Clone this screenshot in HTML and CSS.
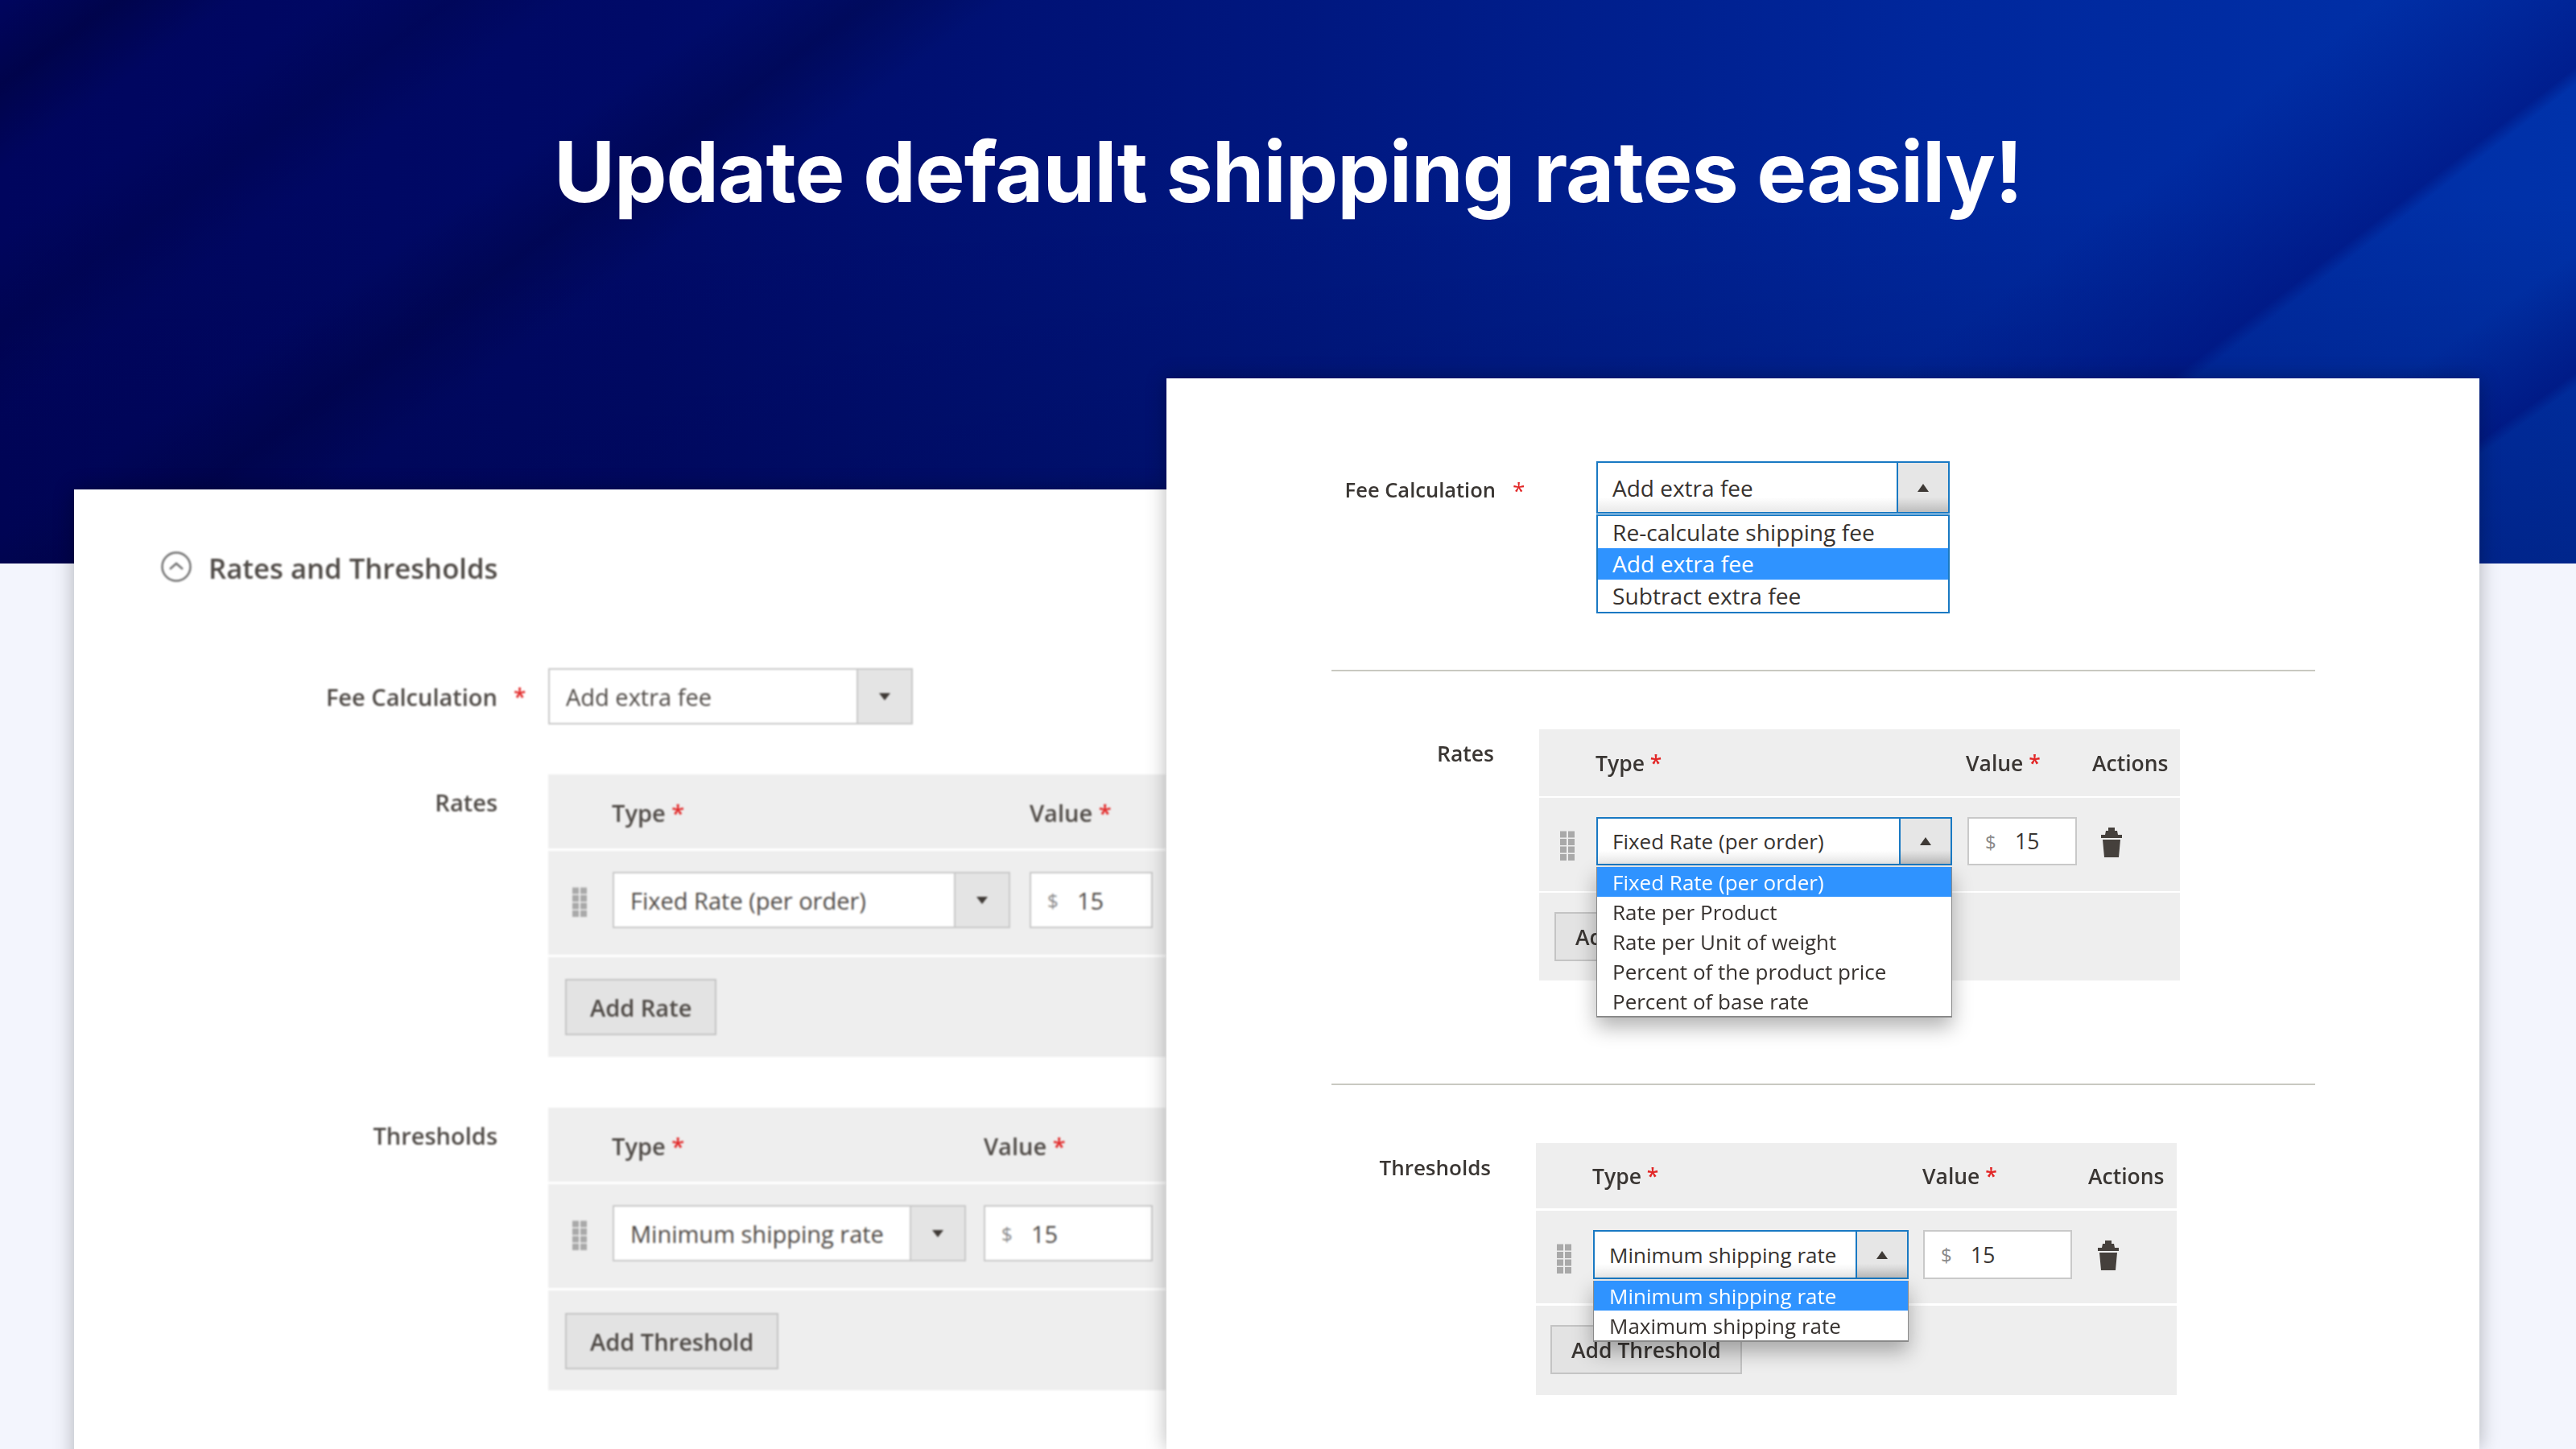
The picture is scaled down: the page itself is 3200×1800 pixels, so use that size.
FILE: index.html
```html
<!DOCTYPE html>
<html lang="en">
<head>
    <meta charset="UTF-8">
    <meta name="viewport" content="width=device-width, initial-scale=1.0">
    <title>Update default shipping rates easily!</title>
    <link rel="stylesheet" href="styles.css">
</head>
<body>
    <div class="hero">
        <h1>Update default shipping rates easily!</h1>
    </div>

    <div class="cards">
        <!-- closed state -->
        <div class="card card-left">
            <div class="card-body">
                <div class="section-title">
                    <svg class="collapse-icon" viewBox="0 0 38 38"><circle cx="19" cy="19" r="17.5"/><path d="M11 22l8-7 8 7"/></svg>
                    <span>Rates and Thresholds</span>
                </div>

                <div class="field-row fee-row">
                    <div class="field-label">Fee Calculation</div>
                    <div class="req">*</div>
                    <div class="select fee-select">
                        <div class="select-text">Add extra fee</div>
                        <div class="select-btn"><span class="arrow-down"></span></div>
                    </div>
                </div>

                <div class="field-row rates-row">
                    <div class="field-label table-label">Rates</div>
                    <div class="dyn-table">
                        <div class="t-head">
                            <div class="col-type">Type <span class="req-inline">*</span></div>
                            <div>Value <span class="req-inline">*</span></div>
                        </div>
                        <div class="t-row">
                            <svg class="drag" viewBox="0 0 18 36"><path d="M0 0h8v8H0zM10 0h8v8h-8zM0 9.500h8v8H0zM10 9.500h8v8h-8zM0 19h8v8H0zM10 19h8v8h-8zM0 28.500h8v8H0zM10 28.500h8v8h-8z"/></svg>
                            <div class="select col-type">
                                <div class="select-text">Fixed Rate (per order)</div>
                                <div class="select-btn"><span class="arrow-down"></span></div>
                            </div>
                            <div class="value-input"><span class="currency">$</span><span>15</span></div>
                        </div>
                        <div class="t-foot"><div class="add-btn">Add Rate</div></div>
                    </div>
                </div>

                <div class="field-row thresholds-row">
                    <div class="field-label table-label">Thresholds</div>
                    <div class="dyn-table narrow-type">
                        <div class="t-head">
                            <div class="col-type">Type <span class="req-inline">*</span></div>
                            <div>Value <span class="req-inline">*</span></div>
                        </div>
                        <div class="t-row">
                            <svg class="drag" viewBox="0 0 18 36"><path d="M0 0h8v8H0zM10 0h8v8h-8zM0 9.500h8v8H0zM10 9.500h8v8h-8zM0 19h8v8H0zM10 19h8v8h-8zM0 28.500h8v8H0zM10 28.500h8v8h-8z"/></svg>
                            <div class="select col-type">
                                <div class="select-text">Minimum shipping rate</div>
                                <div class="select-btn"><span class="arrow-down"></span></div>
                            </div>
                            <div class="value-input"><span class="currency">$</span><span>15</span></div>
                        </div>
                        <div class="t-foot"><div class="add-btn">Add Threshold</div></div>
                    </div>
                </div>
            </div>
        </div>

        <!-- open dropdowns -->
        <div class="card card-right">
            <div class="fee-open">
                <div class="field-label">Fee Calculation</div>
                <div class="req">*</div>
                <div class="select select-open">
                    <div class="select-text">Add extra fee</div>
                    <div class="select-btn"><span class="arrow-up"></span></div>
                    <div class="dropdown fee-dropdown">
                        <div class="option">Re-calculate shipping fee</div>
                        <div class="option selected">Add extra fee</div>
                        <div class="option">Subtract extra fee</div>
                    </div>
                </div>
            </div>

            <div class="divider"></div>

            <div class="open-section open-rates">
                <div class="field-label">Rates</div>
                <div class="dyn-table">
                    <div class="t-head">
                        <div class="col-type">Type <span class="req-inline">*</span></div>
                        <div class="col-value">Value <span class="req-inline">*</span></div>
                        <div>Actions</div>
                    </div>
                    <div class="t-row">
                        <svg class="drag" viewBox="0 0 18 36"><path d="M0 0h8v8H0zM10 0h8v8h-8zM0 9.500h8v8H0zM10 9.500h8v8h-8zM0 19h8v8H0zM10 19h8v8h-8zM0 28.500h8v8H0zM10 28.500h8v8h-8z"/></svg>
                        <div class="select select-open col-type">
                            <div class="select-text">Fixed Rate (per order)</div>
                            <div class="select-btn"><span class="arrow-up"></span></div>
                            <div class="dropdown plain-dropdown">
                                <div class="option selected">Fixed Rate (per order)</div>
                                <div class="option">Rate per Product</div>
                                <div class="option">Rate per Unit of weight</div>
                                <div class="option">Percent of the product price</div>
                                <div class="option">Percent of base rate</div>
                            </div>
                        </div>
                        <div class="value-input col-value"><span class="currency">$</span><span>15</span></div>
                        <svg class="trash" viewBox="0 0 28 37"><path d="M10 0h8v4h3l1 5h5v4H1V9h5l1-5h3zM3 15h22l-2 22H5z"/></svg>
                    </div>
                    <div class="t-foot"><div class="add-btn">Add</div></div>
                </div>
            </div>

            <div class="divider"></div>

            <div class="open-section open-thresholds">
                <div class="field-label">Thresholds</div>
                <div class="dyn-table">
                    <div class="t-head">
                        <div class="col-type">Type <span class="req-inline">*</span></div>
                        <div class="col-value">Value <span class="req-inline">*</span></div>
                        <div>Actions</div>
                    </div>
                    <div class="t-row">
                        <svg class="drag" viewBox="0 0 18 36"><path d="M0 0h8v8H0zM10 0h8v8h-8zM0 9.500h8v8H0zM10 9.500h8v8h-8zM0 19h8v8H0zM10 19h8v8h-8zM0 28.500h8v8H0zM10 28.500h8v8h-8z"/></svg>
                        <div class="select select-open col-type">
                            <div class="select-text">Minimum shipping rate</div>
                            <div class="select-btn"><span class="arrow-up"></span></div>
                            <div class="dropdown plain-dropdown">
                                <div class="option selected">Minimum shipping rate</div>
                                <div class="option">Maximum shipping rate</div>
                            </div>
                        </div>
                        <div class="value-input col-value"><span class="currency">$</span><span>15</span></div>
                        <svg class="trash" viewBox="0 0 28 37"><path d="M10 0h8v4h3l1 5h5v4H1V9h5l1-5h3zM3 15h22l-2 22H5z"/></svg>
                    </div>
                    <div class="t-foot"><div class="add-btn">Add Threshold</div></div>
                </div>
            </div>
        </div>
    </div>
</body>
</html>
```

FILE: styles.css
```css
* {
    box-sizing: border-box;
}
html, body {
    margin: 0;
    height: 1800px;
    overflow: hidden;
}
body {
    font-family: "Open Sans", "Liberation Sans", sans-serif;
    background-color: #f3f5fd;
    color: #3a3633;
}

/* banner */
.hero {
    height: 700px;
    padding-top: 144px;
    background:
        linear-gradient(144.7deg, transparent 87%, rgba(0, 14, 120, 0.55) 92%, transparent 92.6%),
        linear-gradient(142.4deg, transparent 72%, rgba(0, 14, 120, 0.55) 80.5%, transparent 81.2%),
        linear-gradient(144deg, transparent 0%, rgba(0, 0, 40, 0.35) 3.5%, transparent 7%, transparent 10%, rgba(0, 0, 50, 0.2) 13.5%, transparent 17%, transparent 22%, rgba(0, 0, 50, 0.3) 26%, transparent 30%),
        linear-gradient(180deg, transparent 35%, rgba(0, 0, 50, 0.25) 100%),
        linear-gradient(90deg, #00055e 0%, #000a68 25%, #00177f 50%, #00279c 75%, #0032aa 100%);
}
.hero h1 {
    margin: 0;
    text-align: center;
    color: #fff;
    font-family: Inter, "Open Sans", sans-serif;
    font-weight: 700;
    font-size: 104px;
    line-height: 138px;
    letter-spacing: -1px;
}

/* cards */
.cards {
    display: flex;
    align-items: flex-start;
    margin: -230px 0 0 92px;
}
.card {
    background: #fff;
    height: 1330px;
    box-shadow: 0 0 24px rgba(0, 0, 0, 0.28);
}
.card-left {
    width: 1357px;
    margin-top: 138px;
    overflow: hidden;
}
.card-body {
    padding: 77px 0 0 108px;
    filter: blur(0.9px);
    color: #4f4a46;
}
.card-right {
    position: relative;
    width: 1631px;
    padding: 103px 0 0 205px;
}

/* left card */
.section-title {
    display: flex;
    align-items: center;
    gap: 21px;
    height: 40px;
    font-size: 34.700px;
    font-weight: 600;
}
.collapse-icon {
    width: 38px;
    height: 38px;
    margin-top: -2px;
    fill: none;
    stroke: #707070;
    stroke-width: 2.500;
}
.field-row {
    display: grid;
    grid-template-columns: 418px 63px 767px;
}
.fee-row {
    margin-top: 105px;
    align-items: center;
}
.rates-row {
    margin-top: 62px;
}
.thresholds-row {
    margin-top: 63px;
}
.field-label {
    font-size: 29px;
    font-weight: 600;
    text-align: right;
}
.table-label {
    grid-column: 1;
    padding-top: 15px;
}
.field-row .dyn-table {
    grid-column: 3;
}
.req {
    padding-left: 20px;
    color: #e22626;
    font-size: 28px;
    font-weight: 600;
}
.req-inline {
    color: #e22626;
}

/* select */
.select {
    position: relative;
    display: flex;
    height: 70px;
    border: 2px solid #c9c9c9;
    background: #fff;
    font-size: 29px;
}
.fee-select {
    width: 453px;
}
.select-text {
    flex: 1;
    min-width: 0;
    padding-left: 20px;
    display: flex;
    align-items: center;
    white-space: nowrap;
}
.select-btn {
    flex: none;
    width: 68px;
    display: flex;
    align-items: center;
    justify-content: center;
    border-left: 2px solid #c9c9c9;
    background: #e4e4e4;
}
.arrow-down {
    border-left: 7px solid transparent;
    border-right: 7px solid transparent;
    border-top: 9px solid #3f3a36;
}
.arrow-up {
    border-left: 7px solid transparent;
    border-right: 7px solid transparent;
    border-bottom: 10px solid #3f3a36;
}

/* dynamic rows table */
.dyn-table {
    font-size: 29px;
}
.t-head, .t-row, .t-foot {
    display: flex;
    background: #eee;
}
.t-head {
    height: 92px;
    align-items: center;
    padding: 2px 0 0 79px;
    font-weight: 600;
}
.t-row {
    position: relative;
    height: 129px;
    margin-top: 3px;
    padding: 26px 0 0 30px;
}
.t-foot {
    height: 124px;
    margin-top: 3px;
    padding: 27px 0 0 21px;
}
.narrow-type .t-foot {
    padding-top: 28px;
}
.card-left .col-type {
    width: 519px;
}
.card-left .t-row .col-type {
    width: 494px;
    margin: 0 24px 0 32px;
}
.card-left .narrow-type .col-type {
    width: 462px;
}
.card-left .narrow-type .t-row .col-type {
    width: 439px;
    margin-right: 22px;
}
.card-left .value-input {
    width: 153px;
}
.card-left .narrow-type .value-input {
    width: 210px;
}
.drag {
    flex: none;
    width: 18px;
    height: 37px;
    margin-top: 19px;
    fill: #a9a9a9;
}
.value-input {
    display: flex;
    align-items: center;
    height: 70px;
    padding-left: 20px;
    border: 2px solid #c9c9c9;
    background: #fff;
    font-size: 29px;
}
.currency {
    width: 37px;
    color: #8a8a8a;
    font-size: 24px;
}
.add-btn {
    display: flex;
    align-items: center;
    height: 70px;
    padding: 0 29px;
    border: 2px solid #c4c4c4;
    background: #e3e3e3;
    font-size: 29px;
    font-weight: 600;
}

/* right card */
.fee-open {
    display: grid;
    grid-template-columns: 204px 125px 439px;
}
.fee-open .field-label {
    padding-top: 18px;
    font-size: 25.500px;
}
.fee-open .req {
    padding: 17px 0 0 21px;
    font-weight: 400;
}
.card-right .select {
    height: 65px;
    border-color: #1979c3;
    font-size: 28px;
    color: #37322f;
}
.card-right .select-btn {
    width: 64px;
    border-left-color: #1979c3;
    background: linear-gradient(#e6e6e6 70%, #bdbdbd);
}
.card-right .select-text {
    padding-left: 18px;
    background: linear-gradient(#fff 70%, #e9e9e9);
}
.dropdown {
    position: absolute;
    z-index: 2;
    top: 100%;
    left: -2px;
    right: -2px;
    margin-top: 4px;
    background: #fff;
    white-space: nowrap;
}
.fee-dropdown {
    margin-top: 3px;
    border: 2px solid #1979c3;
    font-size: 28.200px;
}
.fee-dropdown .option {
    height: 39.500px;
    padding-left: 18px;
}
.plain-dropdown {
    border-bottom: 2px solid #8a8a8a;
    border-left: 1px solid #8a8a8a;
    border-right: 1px solid #8a8a8a;
    box-shadow: 0 12px 24px rgba(0, 0, 0, 0.3);
}
.option {
    display: flex;
    align-items: center;
    height: 37px;
    padding-left: 19px;
}
.option.selected {
    background: #2f93ff;
    color: #fff;
}
.divider {
    width: 1222px;
    height: 2px;
    background: #c9c9c1;
}
.fee-open + .divider {
    margin-top: 194px;
}
.open-section {
    display: flex;
}
.open-section .field-label {
    padding-top: 12px;
    font-size: 26.500px;
}
.open-section .dyn-table {
    font-size: 26.500px;
}
.open-section .t-head {
    padding: 0 0 0 70px;
}
.open-section .t-row {
    margin-top: 2px;
    padding: 24px 0 0 26px;
}
.open-section .t-row .drag {
    margin: 17px 27px 0 0;
}
.open-section .t-foot {
    margin-top: 2px;
}
.open-section .select {
    height: 60px;
    width: 442px;
    font-size: 26px;
}
.open-section .value-input {
    height: 60px;
    margin-left: 19px;
    width: 136px;
    font-size: 26.500px;
}
.open-section .add-btn {
    height: 61px;
    padding: 0 24px;
    font-size: 26.500px;
}
.trash {
    flex: none;
    width: 28px;
    height: 37px;
    margin: 13px 0 0 29px;
    fill: #45403c;
}
.open-rates {
    margin-top: 72px;
    height: 440px;
}
.open-rates .field-label {
    width: 202px;
    margin-right: 56px;
}
.open-rates .dyn-table {
    width: 796px;
}
.open-rates .t-head {
    height: 83px;
}
.open-rates .t-row {
    height: 116px;
}
.open-rates .t-foot {
    height: 109px;
    padding: 24px 0 0 19px;
}
.open-rates .t-head .col-type {
    width: 460px;
}
.open-rates .t-head .col-value {
    width: 157px;
}
.open-thresholds {
    margin-top: 72px;
    filter: blur(0.6px);
}
.open-thresholds .field-label {
    width: 198px;
    margin-right: 56px;
    font-size: 26px;
}
.open-thresholds .dyn-table {
    width: 796px;
}
.open-thresholds .t-head {
    height: 81px;
}
.open-thresholds .t-row {
    height: 115px;
    margin-top: 3px;
}
.open-thresholds .t-foot {
    height: 111px;
    margin-top: 3px;
    padding: 24px 0 0 18px;
}
.open-thresholds .select {
    width: 392px;
    height: 61px;
}
.open-thresholds .t-head .col-type {
    width: 410px;
}
.open-thresholds .t-head .col-value {
    width: 206px;
}
.open-thresholds .value-input {
    width: 185px;
    height: 61px;
    margin-left: 18px;
}
.open-thresholds .trash {
    margin-left: 31px;
}
```
